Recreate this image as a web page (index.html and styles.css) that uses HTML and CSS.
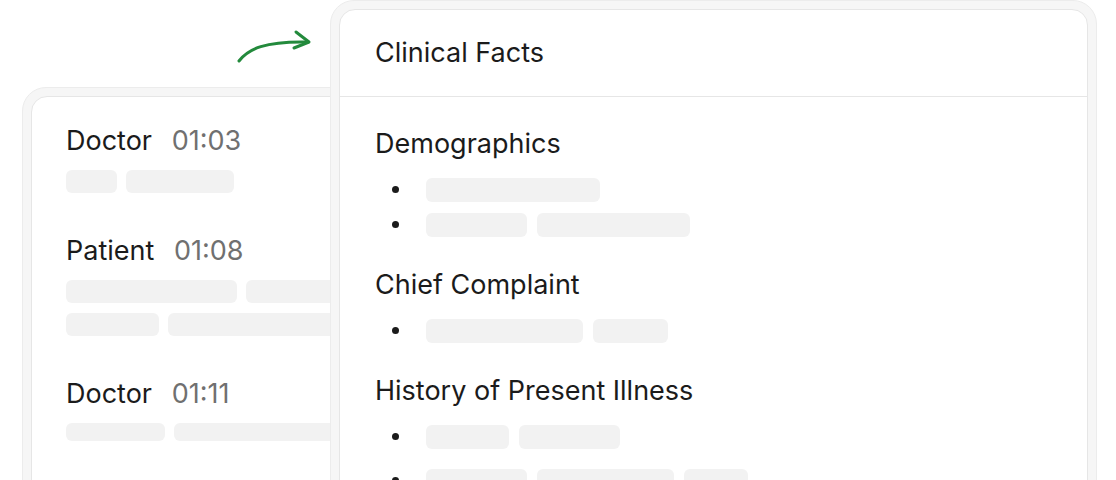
FILE: index.html
```html
<!DOCTYPE html>
<html lang="en">
<head>
    <meta charset="UTF-8">
    <meta name="viewport" content="width=device-width, initial-scale=1.0">
    <title>Clinical Facts</title>
    <link rel="stylesheet" href="styles.css">
</head>
<body>
    <div class="stage">
        <svg class="arrow" width="90" height="45" viewBox="0 0 90 45" fill="none">
            <path d="M9 36 C 18 24, 35 16, 78 17" />
            <path d="M66 7 L79 17 L64 23" />
        </svg>

        <div class="card card-transcript">
            <div class="card-inner">
                <div class="entry">
                    <div class="speaker">Doctor <span class="time">01:03</span></div>
                    <div class="bars">
                        <span class="bar" style="width: 51px"></span>
                        <span class="bar" style="width: 108px"></span>
                    </div>
                </div>
                <div class="entry">
                    <div class="speaker">Patient <span class="time">01:08</span></div>
                    <div class="bars">
                        <span class="bar" style="width: 171px"></span>
                        <span class="bar" style="width: 130px"></span>
                    </div>
                    <div class="bars">
                        <span class="bar" style="width: 93px"></span>
                        <span class="bar" style="width: 200px"></span>
                    </div>
                </div>
                <div class="entry">
                    <div class="speaker">Doctor <span class="time">01:11</span></div>
                    <div class="bars">
                        <span class="bar thin" style="width: 99px"></span>
                        <span class="bar thin" style="width: 200px"></span>
                    </div>
                </div>
            </div>
        </div>

        <div class="card card-facts">
            <div class="card-inner">
                <div class="facts-header">Clinical Facts</div>
                <div class="facts-body">
                    <h3>Demographics</h3>
                    <ul>
                        <li><span class="bar" style="width: 174px"></span></li>
                        <li>
                            <span class="bar" style="width: 101px"></span>
                            <span class="bar" style="width: 153px"></span>
                        </li>
                    </ul>

                    <h3>Chief Complaint</h3>
                    <ul>
                        <li>
                            <span class="bar" style="width: 157px"></span>
                            <span class="bar" style="width: 75px"></span>
                        </li>
                    </ul>

                    <h3>History of Present Illness</h3>
                    <ul>
                        <li>
                            <span class="bar" style="width: 83px"></span>
                            <span class="bar" style="width: 101px"></span>
                        </li>
                        <li class="spaced">
                            <span class="bar" style="width: 101px"></span>
                            <span class="bar" style="width: 137px"></span>
                            <span class="bar" style="width: 64px"></span>
                        </li>
                    </ul>
                </div>
            </div>
        </div>
    </div>
</body>
</html>
```
FILE: styles.css
```css
body {
    margin: 0;
    background: #fff;
    font-family: Inter, "Noto Sans", sans-serif;
    color: #1b1b1b;
}
.stage {
    position: relative;
    display: flex;
    align-items: flex-start;
    height: 480px;
    padding-left: 22px;
    overflow: hidden;
}
.arrow {
    position: absolute;
    left: 230px;
    top: 25px;
}
.arrow path {
    stroke: #238a3c;
    stroke-width: 3;
    stroke-linecap: round;
    stroke-linejoin: round;
}
.card {
    flex: none;
    padding: 8px;
    background: #f6f6f6;
    border: 1px solid #ececec;
    border-radius: 24px;
}
.card-inner {
    height: 100%;
    box-sizing: border-box;
    background: #fff;
    border: 1px solid #e6e6e6;
    border-radius: 16px;
}
.card-transcript {
    width: 360px;
    height: 500px;
    margin-top: 87px;
}
.card-transcript .card-inner {
    padding: 28px 34px;
}
.card-facts {
    position: relative;
    width: 749px;
    height: 560px;
    margin-top: 0;
    margin-left: -70px;
}

/* transcript */
.entry {
    margin-bottom: 42px;
}
.speaker {
    font-size: 27px;
    line-height: 32px;
    margin-bottom: 13px;
    white-space: nowrap;
}
.time {
    margin-left: 12px;
    color: #707070;
}
.bars {
    display: flex;
    gap: 9px;
    margin-bottom: 10px;
    white-space: nowrap;
}
.bar {
    display: inline-block;
    flex: none;
    height: 23px;
    background: #f2f2f2;
    border-radius: 6px;
}
.bar.thin {
    height: 18px;
}

/* facts */
.facts-header {
    padding: 27px 35px;
    font-size: 27px;
    line-height: 32px;
    border-bottom: 1px solid #e6e6e6;
}
.facts-body {
    padding: 31px 35px;
}
.facts-body h3 {
    margin: 27px 0 0;
    font-size: 27px;
    line-height: 32px;
    font-weight: 400;
}
.facts-body h3:first-child {
    margin-top: 0;
}
.facts-body ul {
    list-style: none;
    margin: 12px 0 0;
    padding: 0;
}
.facts-body li {
    position: relative;
    display: flex;
    align-items: center;
    gap: 10px;
    height: 35px;
    padding-left: 51px;
}
.facts-body li.spaced {
    margin-top: 9px;
}
.facts-body li::before {
    content: "";
    position: absolute;
    left: 17px;
    top: 14px;
    width: 7px;
    height: 7px;
    border-radius: 50%;
    background: #1b1b1b;
}
.facts-body li .bar {
    height: 24px;
}
```
